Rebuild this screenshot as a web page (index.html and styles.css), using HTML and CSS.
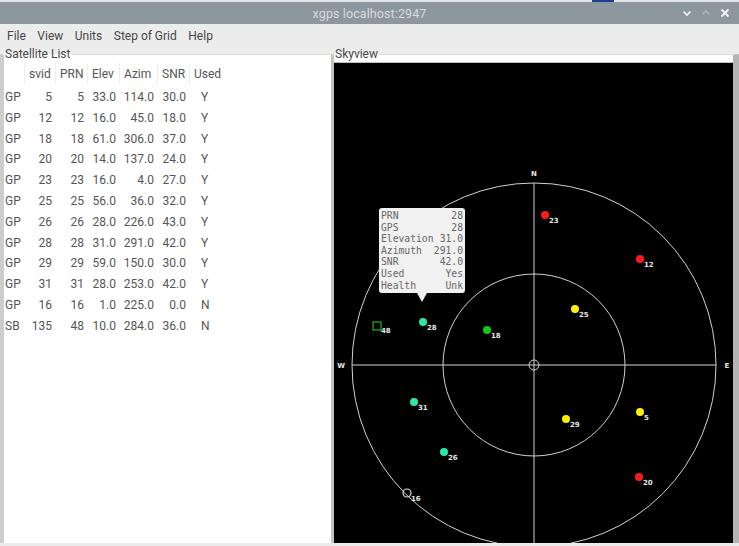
FILE: index.html
```html
<!DOCTYPE html>
<html>
<head>
<meta charset="utf-8">
<title>xgps localhost:2947</title>
<link rel="stylesheet" href="styles.css">
</head>
<body>
<div class="desk"><span class="desk-blue"></span></div>
<header class="titlebar">
  <span></span>
  <span class="title">xgps localhost:2947</span>
  <span class="wm-buttons">
    <svg class="wm" width="10" height="10" viewBox="0 0 10 10"><polyline points="1.5,3.5 5,7 8.5,3.5" fill="none" stroke="#f4f6f7" stroke-width="1.6"/></svg>
    <svg class="wm" width="10" height="10" viewBox="0 0 10 10"><polyline points="1.5,6.5 5,3 8.5,6.5" fill="none" stroke="#aeb7bc" stroke-width="1.4"/></svg>
    <svg class="wm" width="10" height="10" viewBox="0 0 10 10"><path d="M1.5 1.5 L8.5 8.5 M8.5 1.5 L1.5 8.5" fill="none" stroke="#f4f6f7" stroke-width="1.8"/></svg>
  </span>
</header>
<nav class="menubar">
  <span>File</span><span>View</span><span>Units</span><span>Step of Grid</span><span>Help</span>
</nav>
<main class="main">
  <fieldset class="pane list-pane">
    <legend>Satellite List</legend>
    <div class="sat-table">
      <div class="th"></div><div class="th">svid</div><div class="th">PRN</div><div class="th">Elev</div><div class="th">Azim</div><div class="th">SNR</div><div class="th last">Used</div>

      <div class="td l">GP</div><div class="td">5</div><div class="td">5</div><div class="td">33.0</div><div class="td">114.0</div><div class="td">30.0</div><div class="td u">Y</div>
      <div class="td l">GP</div><div class="td">12</div><div class="td">12</div><div class="td">16.0</div><div class="td">45.0</div><div class="td">18.0</div><div class="td u">Y</div>
      <div class="td l">GP</div><div class="td">18</div><div class="td">18</div><div class="td">61.0</div><div class="td">306.0</div><div class="td">37.0</div><div class="td u">Y</div>
      <div class="td l">GP</div><div class="td">20</div><div class="td">20</div><div class="td">14.0</div><div class="td">137.0</div><div class="td">24.0</div><div class="td u">Y</div>
      <div class="td l">GP</div><div class="td">23</div><div class="td">23</div><div class="td">16.0</div><div class="td">4.0</div><div class="td">27.0</div><div class="td u">Y</div>
      <div class="td l">GP</div><div class="td">25</div><div class="td">25</div><div class="td">56.0</div><div class="td">36.0</div><div class="td">32.0</div><div class="td u">Y</div>
      <div class="td l">GP</div><div class="td">26</div><div class="td">26</div><div class="td">28.0</div><div class="td">226.0</div><div class="td">43.0</div><div class="td u">Y</div>
      <div class="td l">GP</div><div class="td">28</div><div class="td">28</div><div class="td">31.0</div><div class="td">291.0</div><div class="td">42.0</div><div class="td u">Y</div>
      <div class="td l">GP</div><div class="td">29</div><div class="td">29</div><div class="td">59.0</div><div class="td">150.0</div><div class="td">30.0</div><div class="td u">Y</div>
      <div class="td l">GP</div><div class="td">31</div><div class="td">31</div><div class="td">28.0</div><div class="td">253.0</div><div class="td">42.0</div><div class="td u">Y</div>
      <div class="td l">GP</div><div class="td">16</div><div class="td">16</div><div class="td">1.0</div><div class="td">225.0</div><div class="td">0.0</div><div class="td u">N</div>
      <div class="td l">SB</div><div class="td">135</div><div class="td">48</div><div class="td">10.0</div><div class="td">284.0</div><div class="td">36.0</div><div class="td u">N</div>
    </div>
  </fieldset>
  <fieldset class="pane sky-pane">
    <legend>Skyview</legend>
    <div class="sky">
      <svg class="sky-svg" width="399" height="480" viewBox="0 0 399 480">
        <g fill="none" stroke="#d2d2d2" stroke-width="1">
          <circle cx="200" cy="302" r="182"/>
          <circle cx="200" cy="302" r="91"/>
          <circle cx="200" cy="302" r="5"/>
          <line x1="18" y1="302" x2="382" y2="302"/>
          <line x1="200" y1="120" x2="200" y2="480"/>
        </g>
        <g class="compass" fill="#e8e8e8">
          <text x="200" y="113" text-anchor="middle">N</text>
          <text x="7" y="305" text-anchor="middle">W</text>
          <text x="393" y="305" text-anchor="middle">E</text>
        </g>
        <g class="sats">
          <circle cx="211" cy="152" r="4" fill="#ff1a1a"/>
          <circle cx="306" cy="196" r="4" fill="#ff1a1a"/>
          <circle cx="241" cy="246" r="4" fill="#ffee00"/>
          <circle cx="89" cy="259" r="4" fill="#2de6a8"/>
          <circle cx="153" cy="267" r="4" fill="#14c814"/>
          <rect x="39" y="259" width="8" height="8" fill="none" stroke="#1fb01f" stroke-width="1.2"/>
          <circle cx="80" cy="339" r="4" fill="#2de6a8"/>
          <circle cx="232" cy="356" r="4" fill="#ffee00"/>
          <circle cx="306" cy="349" r="4" fill="#ffee00"/>
          <circle cx="110" cy="389" r="4" fill="#2de6a8"/>
          <circle cx="305" cy="414" r="4" fill="#ff1a1a"/>
          <circle cx="73" cy="430" r="4" fill="none" stroke="#e0e0e0" stroke-width="1.2"/>
        </g>
        <g class="sat-labels" fill="#e6e6e6">
          <text x="215" y="160">23</text>
          <text x="310" y="204">12</text>
          <text x="245" y="254">25</text>
          <text x="93" y="267">28</text>
          <text x="157" y="275">18</text>
          <text x="47" y="270">48</text>
          <text x="84" y="347">31</text>
          <text x="236" y="364">29</text>
          <text x="310" y="357">5</text>
          <text x="114" y="397">26</text>
          <text x="309" y="422">20</text>
          <text x="77" y="438">16</text>
        </g>
      </svg>
      <div class="tooltip">
        <div class="tip-row"><span>PRN</span><span>28</span></div>
        <div class="tip-row"><span>GPS</span><span>28</span></div>
        <div class="tip-row"><span>Elevation</span><span>31.0</span></div>
        <div class="tip-row"><span>Azimuth</span><span>291.0</span></div>
        <div class="tip-row"><span>SNR</span><span>42.0</span></div>
        <div class="tip-row"><span>Used</span><span>Yes</span></div>
        <div class="tip-row"><span>Health</span><span>Unk</span></div>
      </div>
    </div>
  </fieldset>
</main>
<div class="bottom"></div>
</body>
</html>
```
FILE: styles.css
```css
html, body {
  margin: 0;
  padding: 0;
}
body {
  width: 739px;
  height: 546px;
  overflow: hidden;
  background: #ececec;
  font-family: Roboto, "Noto Sans", "Liberation Sans", sans-serif;
}

.desk {
  height: 2px;
  background: #e4e7ea;
  display: flex;
}
.desk-blue {
  margin-left: 592px;
  width: 22px;
  height: 2px;
  background: #1d3f8a;
}

.titlebar {
  height: 22px;
  background: #8c979e;
  display: grid;
  grid-template-columns: 1fr auto 1fr;
  align-items: center;
}
.title {
  color: #d6dbde;
  font-size: 12.5px;
  letter-spacing: 0.1px;
  padding-top: 1px;
}
.wm-buttons {
  justify-self: end;
  display: flex;
  align-items: center;
  gap: 9px;
  padding-right: 9px;
}
.wm {
  display: block;
}

.menubar {
  height: 23px;
  display: flex;
  align-items: center;
  gap: 11.5px;
  padding-left: 7px;
  padding-top: 1px;
  box-sizing: border-box;
  font-size: 12px;
  color: #464646;
}

.main {
  display: flex;
  height: 496px;
}

.pane {
  margin: 0;
  padding: 0;
  min-width: 0;
  border: 0;
  background: #ffffff;
}
.pane legend {
  padding: 0 1px;
  margin-left: 0;
  font-size: 12px;
  line-height: 14px;
  color: #474747;
}

.list-pane {
  width: 327px;
  border-left: 4px solid #cdcdcd;
  border-top: 1px solid #dcdcdc;
}

.sat-table {
  margin-top: 2px;
  display: grid;
  grid-template-columns: 21px 31px 32px 32px 38px 32px 1fr;
  grid-template-rows: 24px;
  grid-auto-rows: 20.8px;
  font-size: 12px;
  color: #555;
}
.th {
  height: 22px;
  line-height: 22px;
  border-right: 1px solid #eeeeee;
  white-space: nowrap;
  padding-left: 4px;
}
.th.last {
  border-right: 0;
}
.td {
  line-height: 20.8px;
  text-align: right;
  white-space: nowrap;
  padding-right: 4px;
}
.td.l {
  text-align: left;
  padding-left: 1px;
  padding-right: 0;
}
.td.u {
  text-align: left;
  padding-left: 11px;
  padding-right: 0;
}

.sky-pane {
  width: 399px;
  border-left: 3px solid #c4c4c4;
  border-right: 6px solid #b4b4b4;
  border-top: 1px solid #dcdcdc;
}
.sky {
  position: relative;
  margin-top: 1px;
  border-top: 1px solid #bdbdbd;
  height: 480px;
  background: #000;
}
.sky-svg {
  display: block;
}
.compass text {
  font-family: "DejaVu Sans", sans-serif;
  font-weight: bold;
  font-size: 7px;
}
.sat-labels text {
  font-family: "DejaVu Sans", sans-serif;
  font-weight: bold;
  font-size: 7px;
}

.tooltip {
  position: absolute;
  left: 45px;
  top: 145px;
  width: 82px;
  height: 82px;
  padding: 2px 2px 1px 2px;
  background: #f1f1f1;
  border-radius: 3px;
  font-family: "DejaVu Sans Mono", monospace;
  font-size: 9.7px;
  line-height: 11.6px;
  color: #666666;
}
.tooltip::after {
  content: "";
  position: absolute;
  left: 38px;
  bottom: -9px;
  border-left: 5px solid transparent;
  border-right: 5px solid transparent;
  border-top: 9px solid #f1f1f1;
}
.tip-row {
  display: flex;
  justify-content: space-between;
}

.bottom {
  height: 3px;
  background: #ececec;
}
```
